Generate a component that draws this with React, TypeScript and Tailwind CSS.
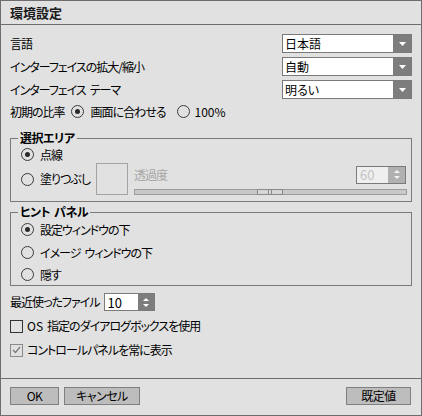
import React from "react";

const FONT = "font-['Noto_Sans_CJK_JP','Noto_Sans',sans-serif] [font-feature-settings:'palt']";

function Sp() {
  return <span className="inline-block w-[4px]" />;
}

function Radio({ checked }: { checked?: boolean }) {
  return (
    <span className="w-[13px] h-[13px] rounded-full border border-[#3a3a3a] flex items-center justify-center shrink-0">
      {checked && <span className="w-[5px] h-[5px] rounded-full bg-[#2a2a2a]" />}
    </span>
  );
}

function Check({ checked, dim }: { checked?: boolean; dim?: boolean }) {
  return (
    <span
      className={
        "w-[13px] h-[13px] border flex items-center justify-center shrink-0 " +
        (dim ? "border-[#8a8a8a]" : "border-[#333333]")
      }
    >
      {checked && (
        <svg width="9" height="8" viewBox="0 0 9 8">
          <path d="M1 4 L3.5 6.5 L8 1" fill="none" stroke="#7a7a7a" strokeWidth="1.3" />
        </svg>
      )}
    </span>
  );
}

function Dropdown({ value }: { value: string }) {
  return (
    <div className="w-[130px] h-[19px] flex border border-[#7a7a7a] bg-white">
      <div className="flex-1 flex items-center pl-[2px] leading-none tracking-normal">{value}</div>
      <div className="w-[18px] bg-[#7d7d7d] flex items-center justify-center">
        <svg width="7" height="4" viewBox="0 0 7 4">
          <path d="M0 0 H7 L3.5 4 Z" fill="#ffffff" />
        </svg>
      </div>
    </div>
  );
}

function Arrows({ color }: { color: string }) {
  return (
    <svg width="6" height="9" viewBox="0 0 6 9">
      <path d="M0 3 L3 0 L6 3 Z" fill={color} />
      <path d="M0 6 L3 9 L6 6 Z" fill={color} />
    </svg>
  );
}

function Row({ label, value }: { label: React.ReactNode; value: string }) {
  return (
    <div className="h-[19px] flex items-center justify-between">
      <span className="leading-none flex items-center">{label}</span>
      <Dropdown value={value} />
    </div>
  );
}

function Button({ label, w }: { label: string; w: string }) {
  return (
    <div className={"h-[18px] bg-[#bdbdbd] border border-[#808080] flex items-center justify-center leading-none tracking-[-0.5px] " + w}>
      {label}
    </div>
  );
}

export default function App() {
  return (
    <div className={"w-[422px] h-[416px] bg-[#e1e1e1] border border-[#6e6e6e] flex flex-col text-[12px] text-black tracking-[-1px] " + FONT}>
      <div className="h-[24px] shrink-0 border-b border-[#6e6e6e] flex items-center pl-[9px] font-bold text-[13px] leading-none text-[#1a1a1a] tracking-normal">
        環境設定
      </div>

      <div className="px-[9px] pt-[9px] flex flex-col">
        <Row label="言語" value="日本語" />
        <div className="mt-[4px]">
          <Row label="インターフェイスの拡大/縮小" value="自動" />
        </div>
        <div className="mt-[4px]">
          <Row
            label={
              <>
                インターフェイス
                <Sp />
                テーマ
              </>
            }
            value="明るい"
          />
        </div>
        <div className="mt-[3px] h-[19px] flex items-center leading-none">
          <span>初期の比率</span>
          <span className="ml-[6px]">
            <Radio checked />
          </span>
          <span className="ml-[7px]">画面に合わせる</span>
          <span className="ml-[11px]">
            <Radio />
          </span>
          <span className="ml-[5px] tracking-normal">100%</span>
        </div>

        <fieldset className="mt-[9px] border border-[#7a7a7a] p-0 m-0 min-w-0">
          <legend className="ml-[7px] px-[2px] font-bold h-[16px] leading-[16px] tracking-[-0.5px]">選択エリア</legend>
          <div className="pl-[10px] pr-[4px] pb-[6px] flex flex-col">
            <div className="h-[17px] flex items-center leading-none">
              <Radio checked />
              <span className="ml-[6px]">点線</span>
            </div>
            <div className="h-[32px] flex items-center">
              <div className="w-[75px] flex items-center leading-none">
                <Radio />
                <span className="ml-[6px]">塗りつぶし</span>
              </div>
              <div className="w-[32px] h-[32px] border border-[#a3a3a3]" />
              <div className="ml-[6px] flex-1 flex flex-col pt-[2px]">
                <div className="flex items-center justify-between">
                  <span className="text-[#a6a6a6] leading-none">透過度</span>
                  <div className="mr-[1px] h-[18px] flex border border-[#7a7a7a]">
                    <div className="w-[31px] bg-[#efefef] flex items-center pl-[3px] text-[13px] text-[#c4c4c4] leading-none tracking-normal">
                      60
                    </div>
                    <div className="w-[17px] bg-[#b0b0b0] flex items-center justify-center">
                      <Arrows color="#f4f4f4" />
                    </div>
                  </div>
                </div>
                <div className="relative mt-[5px] h-[6px] bg-[#c9c9c9] border border-[#9c9c9c]">
                  <div className="absolute left-[122px] top-[-1px] w-[26px] h-[6px] border border-[#8a8a8a] bg-[#d6d6d6] flex items-center justify-center gap-[2px]">
                    <span className="w-[1px] h-[4px] bg-[#8a8a8a]" />
                    <span className="w-[1px] h-[4px] bg-[#8a8a8a]" />
                  </div>
                </div>
              </div>
            </div>
          </div>
        </fieldset>

        <fieldset className="mt-[2px] border border-[#7a7a7a] p-0 m-0 min-w-0">
          <legend className="ml-[7px] px-[2px] font-bold h-[16px] leading-[16px] tracking-[-0.5px]">
            ヒント
            <Sp />
            パネル
          </legend>
          <div className="pl-[10px] pb-[1px] flex flex-col">
            <div className="h-[19px] flex items-center leading-none">
              <Radio checked />
              <span className="ml-[6px]">設定ウィンドウの下</span>
            </div>
            <div className="mt-[4px] h-[19px] flex items-center leading-none">
              <Radio />
              <span className="ml-[6px]">
                イメージ
                <Sp />
                ウィンドウの下
              </span>
            </div>
            <div className="mt-[3px] h-[19px] flex items-center leading-none">
              <Radio />
              <span className="ml-[6px]">隠す</span>
            </div>
          </div>
        </fieldset>

        <div className="mt-[7px] h-[18px] flex items-center leading-none">
          <span>最近使ったファイル</span>
          <div className="ml-[4px] h-[18px] flex border border-[#7a7a7a]">
            <div className="w-[33px] bg-white flex items-center pl-[3px] text-[13px] leading-none tracking-normal">10</div>
            <div className="w-[16px] bg-[#7d7d7d] flex items-center justify-center">
              <Arrows color="#ffffff" />
            </div>
          </div>
        </div>

        <div className="mt-[6px] h-[18px] flex items-center leading-none">
          <Check />
          <span className="ml-[4px]">
            <span className="tracking-normal">OS</span>
            <Sp />
            指定のダイアログボックスを使用
          </span>
        </div>
        <div className="mt-[6px] h-[18px] flex items-center leading-none">
          <Check checked dim />
          <span className="ml-[4px]">コントロールパネルを常に表示</span>
        </div>
      </div>

      <div className="mt-auto h-[37px] shrink-0 border-t border-[#6e6e6e] px-[9px] pt-[8px] flex items-start">
        <Button label="OK" w="w-[49px]" />
        <div className="ml-[5px]">
          <Button label="キャンセル" w="w-[76px]" />
        </div>
        <div className="ml-auto mr-[1px]">
          <Button label="既定値" w="w-[65px]" />
        </div>
      </div>
    </div>
  );
}
